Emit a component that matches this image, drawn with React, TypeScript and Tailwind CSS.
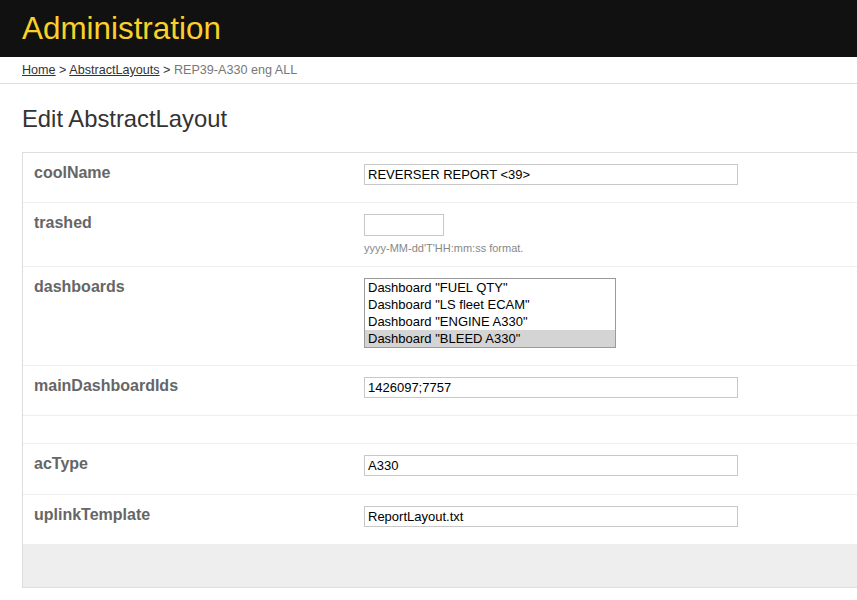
const font = { fontFamily: '"Liberation Sans", Arial, sans-serif' };

const dashboards = [
  'Dashboard "FUEL QTY"',
  'Dashboard "LS fleet ECAM"',
  'Dashboard "ENGINE A330"',
  'Dashboard "BLEED A330"',
];

const Label = ({ children }: { children?: string }) => (
  <div className="w-[341px] shrink-0 pl-[11px] pt-[10px] text-[16px] leading-[20px] font-bold text-[#666]">{children}</div>
);

const TextBox = ({ value, width = "w-[374px]" }: { value: string; width?: string }) => (
  <div className={`${width} h-[21px] border border-[#c8c8c8] bg-white pl-[3px] text-[13px] leading-[19px] text-black`}>
    {value}
  </div>
);

export default function App() {
  return (
    <div className="min-h-[600px] bg-white" style={font}>
      <div className="h-[57px] bg-[#111111] pl-[22px] pt-[11px]">
        <h1 className="text-[31.4px] leading-[36px] text-[#f9d12a]">Administration</h1>
      </div>
      <div className="h-[27px] border-b border-[#dddddd] pl-[22px] pt-[5px] text-[12.6px] leading-[16px] text-[#333]">
        <a href="#" className="underline text-[#333]">Home</a> &gt;{" "}
        <a href="#" className="underline text-[#333]">AbstractLayouts</a> &gt;{" "}
        <span className="text-[#777]">REP39-A330 eng ALL</span>
      </div>

      <h2 className="ml-[22px] mt-[21px] text-[23.8px] leading-[28px] text-[#333]">Edit AbstractLayout</h2>

      <div className="ml-[22px] mt-[19px] border-l border-t border-b border-[#dddddd]">
        <div className="flex h-[50px] border-b border-[#eeeeee]">
          <Label>coolName</Label>
          <div className="pt-[11px]">
            <TextBox value="REVERSER REPORT <39>" />
          </div>
        </div>

        <div className="flex h-[64px] border-b border-[#eeeeee]">
          <Label>trashed</Label>
          <div className="pt-[11px]">
            <div className="w-[80px] h-[22px] border border-[#c8c8c8] bg-white" />
            <p className="mt-[6px] text-[11px] leading-[13px] text-[#888]">yyyy-MM-dd'T'HH:mm:ss format.</p>
          </div>
        </div>

        <div className="flex h-[99px] border-b border-[#eeeeee]">
          <Label>dashboards</Label>
          <div className="pt-[11px]">
            <div className="w-[252px] h-[70px] border border-[#9a9a9a] bg-white">
              {dashboards.map((d, i) => (
                <div
                  key={d}
                  className={`h-[17px] pl-[3px] text-[13px] leading-[17px] text-black ${i === 3 ? "bg-[#d4d4d4]" : ""}`}
                >
                  {d}
                </div>
              ))}
            </div>
          </div>
        </div>

        <div className="flex h-[50px] border-b border-[#eeeeee]">
          <Label>mainDashboardIds</Label>
          <div className="pt-[11px]">
            <TextBox value="1426097;7757" />
          </div>
        </div>

        <div className="h-[28px] border-b border-[#eeeeee]" />

        <div className="flex h-[51px] border-b border-[#eeeeee]">
          <Label>acType</Label>
          <div className="pt-[11px]">
            <TextBox value="A330" />
          </div>
        </div>

        <div className="flex h-[49px]">
          <Label>uplinkTemplate</Label>
          <div className="pt-[11px]">
            <TextBox value="ReportLayout.txt" />
          </div>
        </div>

        <div className="h-[43px] bg-[#eeeeee]" />
      </div>
    </div>
  );
}
